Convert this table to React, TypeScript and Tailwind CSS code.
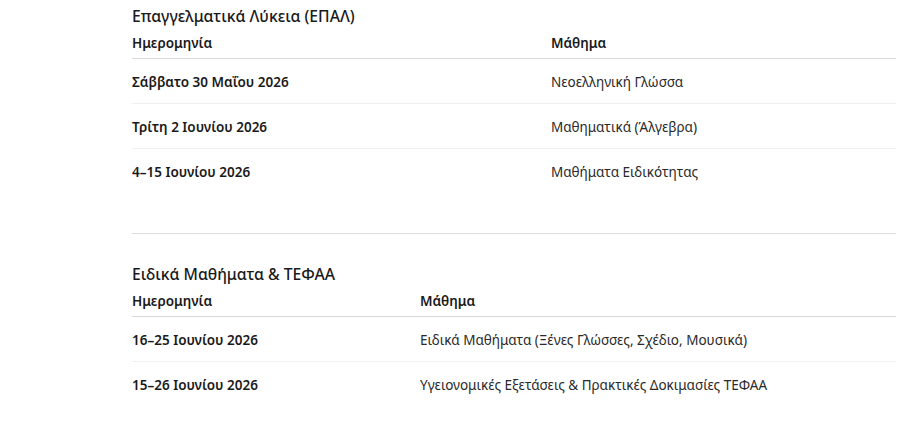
import React from "react"

type Row = { date: string; subject: string }

const epal: Row[] = [
  { date: "Σάββατο 30 Μαΐου 2026", subject: "Νεοελληνική Γλώσσα" },
  { date: "Τρίτη 2 Ιουνίου 2026", subject: "Μαθηματικά (Άλγεβρα)" },
  { date: "4–15 Ιουνίου 2026", subject: "Μαθήματα Ειδικότητας" },
]

const special: Row[] = [
  { date: "16–25 Ιουνίου 2026", subject: "Ειδικά Μαθήματα (Ξένες Γλώσσες, Σχέδιο, Μουσικά)" },
  { date: "15–26 Ιουνίου 2026", subject: "Υγειονομικές Εξετάσεις & Πρακτικές Δοκιμασίες ΤΕΦΑΑ" },
]

function ScheduleTable({ title, rows, wide }: { title: string; rows: Row[]; wide: boolean }) {
  // grid columns differ per table, the way auto table layout split them
  const cols = wide ? "grid-cols-[419px_1fr]" : "grid-cols-[288px_1fr]"
  return (
    <section>
      <h3 className="text-[15.7px] leading-6 font-medium text-[#1a1a1a]">{title}</h3>
      <div className={`grid ${cols} border-b border-[#dadada] py-[5px] text-[13.5px] leading-5 font-semibold text-[#1a1a1a]`}>
        <div>Ημερομηνία</div>
        <div>Μάθημα</div>
      </div>
      {rows.map((r, i) => (
        <div
          key={i}
          className={`grid ${cols} pt-[13px] pb-[11px] text-[13.5px] leading-5 ${i < rows.length - 1 ? "border-b border-[#f0f0f0]" : ""}`}
        >
          <div className="font-semibold text-[#1a1a1a]">{r.date}</div>
          <div className="text-[#2a2a2a]">{r.subject}</div>
        </div>
      ))}
    </section>
  )
}

export default function App() {
  return (
    <div className="w-[900px] h-[422px] overflow-hidden bg-white font-['Noto_Sans',sans-serif]">
      <div className="ml-[132px] w-[764px] pt-1">
        <ScheduleTable title="Επαγγελματικά Λύκεια (ΕΠΑΛ)" rows={epal} wide />
        <div className="mt-10 border-t border-[#dedede]" />
        <div className="pt-[28px]">
          <ScheduleTable title="Ειδικά Μαθήματα & ΤΕΦΑΑ" rows={special} wide={false} />
        </div>
      </div>
    </div>
  )
}
